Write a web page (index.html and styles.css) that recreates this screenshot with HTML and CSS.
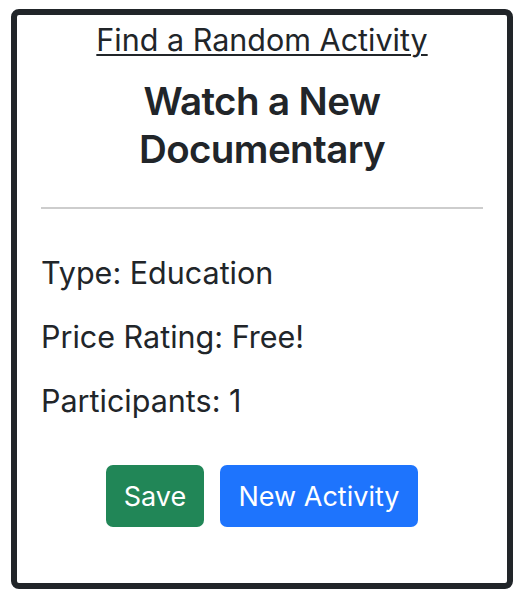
FILE: index.html
```
<!DOCTYPE html>
<html lang="en">
<head>
<meta charset="utf-8">
<title>Find a Random Activity</title>
<link rel="stylesheet" href="styles.css">
</head>
<body>
<div class="card">
  <a class="title-link" href="#">Find a Random Activity</a>
  <h2 class="activity">Watch a New Documentary</h2>
  <hr class="divider">
  <div class="details">
    <p class="detail">Type: Education</p>
    <p class="detail">Price Rating: Free!</p>
    <p class="detail">Participants: 1</p>
  </div>
  <div class="actions">
    <button class="btn btn-save">Save</button>
    <button class="btn btn-new">New Activity</button>
  </div>
</div>
</body>
</html>
```
FILE: styles.css
```
* { box-sizing: border-box; }
html, body { margin: 0; padding: 0; background: #fff; }
body {
  font-family: Inter, "Noto Sans", sans-serif;
  color: #212529;
  padding: 9px 9px 7px 11px;
}
.card {
  width: 502px;
  height: 580px;
  border: 6px solid #212529;
  border-radius: 8px;
  padding: 7px 24px 0 24px;
  display: flex;
  flex-direction: column;
  align-items: stretch;
}
.title-link {
  align-self: center;
  color: #212529;
  font-size: 30.5px;
  line-height: 36px;
  text-decoration: underline;
  text-underline-offset: 3px;
  text-decoration-thickness: 2px;
}
.activity {
  margin: 19px 0 0 0;
  font-size: 38.5px;
  line-height: 48px;
  font-weight: 600;
  letter-spacing: -0.6px;
  text-align: center;
}
.divider {
  margin: 34px 0 0 0;
  border: 0;
  height: 2px;
  background: #cdcdcd;
}
.details { margin-top: 44px; display: flex; flex-direction: column; gap: 24px; }
.detail {
  margin: 0;
  font-size: 30.5px;
  line-height: 40px;
}
.actions {
  margin-top: 44px;
  display: flex;
  justify-content: center;
  gap: 16px;
}
.btn {
  font-family: inherit;
  border: 0;
  border-radius: 7px;
  color: #fff;
  font-size: 27px;
  height: 62px;
  padding: 0;
  white-space: nowrap;
  text-align: center;
  cursor: pointer;
}
.btn-save { background: #218657; width: 98px; }
.btn-new { background: #1e74fd; width: 198px; }
```
